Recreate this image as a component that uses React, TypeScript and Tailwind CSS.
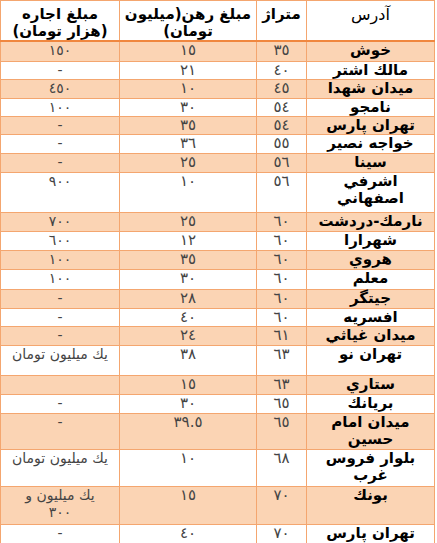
import React from 'react';

type Row = {
  address: string;
  area: string;
  deposit: string;
  rent: string;
  h: string;
  orange: boolean;
};

const rows: Row[] = [
  { address: 'خوش', area: '٣٥', deposit: '١٥', rent: '١٥٠', h: 'h-[20px]', orange: true },
  { address: 'مالك اشتر', area: '٤٠', deposit: '٢١', rent: '-', h: 'h-[18px]', orange: false },
  { address: 'ميدان شهدا', area: '٤٥', deposit: '١٠', rent: '٤٥٠', h: 'h-[19px]', orange: true },
  { address: 'نامجو', area: '٥٤', deposit: '٣٠', rent: '١٠٠', h: 'h-[18px]', orange: false },
  { address: 'تهران پارس', area: '٥٤', deposit: '٣٥', rent: '-', h: 'h-[18px]', orange: true },
  { address: 'خواجه نصير', area: '٥٥', deposit: '٣٦', rent: '-', h: 'h-[19px]', orange: false },
  { address: 'سينا', area: '٥٦', deposit: '٢٥', rent: '-', h: 'h-[19px]', orange: true },
  { address: 'اشرفي اصفهاني', area: '٥٦', deposit: '١٠', rent: '٩٠٠', h: 'h-[40px]', orange: false },
  { address: 'نارمك-دردشت', area: '٦٠', deposit: '٢٥', rent: '٧٠٠', h: 'h-[19px]', orange: true },
  { address: 'شهرارا', area: '٦٠', deposit: '١٢', rent: '٦٠٠', h: 'h-[19px]', orange: false },
  { address: 'هروي', area: '٦٠', deposit: '٣٥', rent: '١٠٠', h: 'h-[19px]', orange: true },
  { address: 'معلم', area: '٦٠', deposit: '٣٠', rent: '١٠٠', h: 'h-[20px]', orange: false },
  { address: 'جيتگر', area: '٦٠', deposit: '٢٨', rent: '-', h: 'h-[19px]', orange: true },
  { address: 'افسريه', area: '٦٠', deposit: '٤٠', rent: '-', h: 'h-[18px]', orange: false },
  { address: 'ميدان غياثي', area: '٦١', deposit: '٢٤', rent: '-', h: 'h-[19px]', orange: true },
  { address: 'تهران نو', area: '٦٣', deposit: '٣٨', rent: 'يك ميليون تومان', h: 'h-[30px]', orange: false },
  { address: 'ستاري', area: '٦٣', deposit: '١٥', rent: '', h: 'h-[19px]', orange: true },
  { address: 'بريانك', area: '٦٥', deposit: '٣٠', rent: '-', h: 'h-[19px]', orange: false },
  { address: 'ميدان امام حسين', area: '٦٥', deposit: '٣٩.٥', rent: '-', h: 'h-[36px]', orange: true },
  { address: 'بلوار فروس غرب', area: '٦٨', deposit: '١٠', rent: 'يك ميليون تومان', h: 'h-[37px]', orange: false },
  { address: 'بونك', area: '٧٠', deposit: '١٥', rent: 'يك ميليون و\n٣٠٠', h: 'h-[38px]', orange: true },
  { address: 'تهران پارس', area: '٧٠', deposit: '٤٠', rent: '-', h: 'h-[21px]', orange: false },
];

const cell = 'border border-[#f4a66f] align-top text-center';

export default function App() {
  return (
    <div className="w-[437px] h-[543px] overflow-hidden bg-white font-['DejaVu_Sans',sans-serif]">
      <table dir="rtl" className="w-[434px] table-fixed border-collapse text-[15px] leading-[17px]">
        <colgroup>
          <col className="w-[128px]" />
          <col className="w-[50px]" />
          <col className="w-[137px]" />
          <col className="w-[119px]" />
        </colgroup>
        <thead>
          <tr className="h-[39px] border-b-2 border-[#f0873f]">
            <th className={`${cell} px-1 pt-[5px] font-normal text-black text-[16px]`}>آدرس</th>
            <th className={`${cell} px-1 pt-[5px] font-bold text-black`}>متراژ</th>
            <th className={`${cell} px-1 pt-[5px] font-bold text-black`}>مبلغ رهن(ميليون تومان)</th>
            <th className={`${cell} px-2 pt-[5px] font-bold text-black`}>مبلغ اجاره (هزار تومان)</th>
          </tr>
        </thead>
        <tbody>
          {rows.map((r, i) => (
            <tr key={i} className={`${r.h} ${r.orange ? 'bg-[#fbd4b4]' : 'bg-white'}`}>
              <td className={`${cell} px-2 font-bold text-black`}>{r.address}</td>
              <td className={`${cell} px-1 text-[#444]`}>{r.area}</td>
              <td className={`${cell} px-1 text-[#444]`}>{r.deposit}</td>
              <td className={`${cell} px-1 text-[#444] text-[14px] whitespace-pre-line`}>{r.rent}</td>
            </tr>
          ))}
        </tbody>
      </table>
    </div>
  );
}
